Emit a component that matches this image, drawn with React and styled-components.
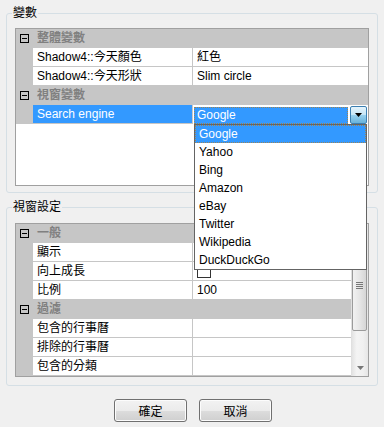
import React from "react";
import styled, { createGlobalStyle } from "styled-components";

const Global = createGlobalStyle`
  html, body { margin: 0; padding: 0; background: #f0f0f0; }
  body {
    font-family: "Liberation Sans", "Noto Sans CJK TC", sans-serif;
    font-size: 12px;
    color: #000;
  }
  * { box-sizing: border-box; }
`;

const Page = styled.div`
  width: 384px;
  height: 427px;
  padding: 6px 6px 0;
  display: flex;
  flex-direction: column;
  overflow: hidden;
`;

const Group = styled.fieldset`
  margin: ${(p) => p.$top}px 0 0;
  padding: 0;
  min-width: 0;
  border: 1px solid #d5dfe5;
  border-radius: 3px;
`;

const Legend = styled.legend`
  margin-left: 5px;
  padding: 0 1px;
  height: 14px;
  line-height: 14px;
`;

const GroupBody = styled.div`
  padding: ${(p) => p.$pt}px 8px ${(p) => p.$pb}px;
`;

const Grid = styled.div`
  height: ${(p) => p.$h}px;
  border: 1px solid #a0a0a0;
  background: #fff;
  display: flex;
  position: relative;
`;

const Rows = styled.div`
  flex: 1;
  min-width: 0;
  display: flex;
  flex-direction: column;
`;

const Row = styled.div`
  display: flex;
  height: 19px;
  flex: none;
`;

const Margin = styled.div`
  width: 17px;
  flex: none;
  background: #c6c6c6;
  display: flex;
  align-items: center;
  justify-content: center;
`;

const CatLabel = styled.div`
  flex: 1;
  background: #c6c6c6;
  color: #808080;
  font-weight: bold;
  padding-left: 4px;
  line-height: 19px;
`;

const NameCell = styled.div`
  width: 160px;
  flex: none;
  padding-left: 4px;
  line-height: 18px;
  border-right: 1px solid #c6c6c6;
  border-bottom: 1px solid #c6c6c6;
  background: ${(p) => (p.$selected ? "#3399ff" : "#fff")};
  color: ${(p) => (p.$selected ? "#fff" : "#000")};
  white-space: nowrap;
`;

const ValueCell = styled.div`
  flex: 1;
  min-width: 0;
  padding-left: 4px;
  line-height: 18px;
  border-bottom: 1px solid #c6c6c6;
  white-space: nowrap;
  display: flex;
  align-items: center;
`;

const ComboCell = styled.div`
  flex: 1;
  min-width: 0;
  position: relative;
  display: flex;
  padding: 1px 1px 0 1px;
`;

const ComboField = styled.div`
  flex: 1;
  height: 17px;
  margin: 1px 2px 0 0;
  background: #3399ff;
  color: #fff;
  border: 1px dotted #9a8458;
  padding-left: 2px;
  line-height: 15px;
`;

const ComboButton = styled.div`
  width: 17px;
  height: 18px;
  flex: none;
  border: 1px solid #3c7fb1;
  border-radius: 2px;
  background: linear-gradient(#e5f4fc 0%, #c4e5f6 50%, #98d1ef 51%, #68b3db 100%);
  display: flex;
  align-items: center;
  justify-content: center;
`;

const DropList = styled.div`
  position: absolute;
  z-index: 10;
  top: 19px;
  left: 1px;
  right: 1px;
  height: 146px;
  background: #fff;
  border: 1px solid #646464;
`;

const DropItem = styled.div`
  height: 18px;
  line-height: 16px;
  padding-left: 3px;
  border: 1px ${(p) => (p.$active ? "dotted #9a8458" : "solid transparent")};
  background: ${(p) => (p.$active ? "#3399ff" : "#fff")};
  color: ${(p) => (p.$active ? "#fff" : "#000")};
`;

const Filler = styled.div`
  flex: 1;
  background: #fff;
`;

const Check = styled.span`
  display: inline-block;
  width: 14px;
  height: 14px;
  border: 1px solid #333;
  background: #fff;
  margin-left: 0;
`;

const ScrollBar = styled.div`
  width: 17px;
  flex: none;
  display: flex;
  flex-direction: column;
  background: linear-gradient(90deg, #e3e3e3 0%, #f4f4f4 30%, #f0f0f0 70%, #e6e6e6 100%);
  border-left: 1px solid #e0e0e0;
`;

const ScrollArrow = styled.div`
  height: 17px;
  flex: none;
  display: flex;
  align-items: center;
  justify-content: center;
`;

const Thumb = styled.div`
  height: 90px;
  margin: 0 1px 0 0;
  border: 1px solid #9b9b9b;
  border-radius: 2px;
  background: linear-gradient(90deg, #f2f2f2 0%, #e6e6e6 50%, #d6d6d6 100%);
  display: flex;
  align-items: center;
  justify-content: center;
`;

const Track = styled.div`
  flex: 1;
`;

const ButtonBar = styled.div`
  display: flex;
  justify-content: center;
  gap: 12px;
  margin-top: 13px;
  padding-left: 2px;
`;

const Button = styled.button`
  width: 73px;
  height: 23px;
  padding: 0;
  border: 1px solid #707070;
  border-radius: 3px;
  background: linear-gradient(#f2f2f2 0%, #ebebeb 50%, #dddddd 51%, #cfcfcf 100%);
  font-family: "Liberation Sans", "Noto Sans CJK TC", sans-serif;
  font-size: 12px;
  color: #000;
  box-shadow: inset 0 0 0 1px #fcfcfc;
`;

const MinusBox = () => (
  <svg width="9" height="9" viewBox="0 0 9 9">
    <rect x="0.5" y="0.5" width="8" height="8" fill="none" stroke="#000" />
    <line x1="2" y1="4.5" x2="7" y2="4.5" stroke="#000" />
  </svg>
);

const DownTriangle = ({ color = "#000", w = 7, h = 4 }) => (
  <svg width={w} height={h} viewBox={`0 0 ${w} ${h}`}>
    <polygon points={`0,0 ${w},0 ${w / 2},${h}`} fill={color} />
  </svg>
);

const Category = ({ label }) => (
  <Row>
    <Margin>
      <MinusBox />
    </Margin>
    <CatLabel>{label}</CatLabel>
  </Row>
);

const Prop = ({ name, children }) => (
  <Row>
    <Margin />
    <NameCell>{name}</NameCell>
    <ValueCell>{children}</ValueCell>
  </Row>
);

const engines = ["Google", "Yahoo", "Bing", "Amazon", "eBay", "Twitter", "Wikipedia", "DuckDuckGo"];

export default function App() {
  return (
    <>
      <Global />
      <Page>
        <Group $top={0}>
          <Legend>變數</Legend>
          <GroupBody $pt={8} $pb={6}>
            <Grid $h={158}>
              <Rows>
                <Category label="整體變數" />
                <Prop name="Shadow4::今天顏色">紅色</Prop>
                <Prop name="Shadow4::今天形狀">Slim circle</Prop>
                <Category label="視窗變數" />
                <Row>
                  <Margin />
                  <NameCell $selected>Search engine</NameCell>
                  <ComboCell>
                    <ComboField>Google</ComboField>
                    <ComboButton>
                      <DownTriangle />
                    </ComboButton>
                    <DropList>
                      {engines.map((e, i) => (
                        <DropItem key={e} $active={i === 0}>
                          {e}
                        </DropItem>
                      ))}
                    </DropList>
                  </ComboCell>
                </Row>
                <Filler />
              </Rows>
            </Grid>
          </GroupBody>
        </Group>

        <Group $top={7}>
          <Legend>視窗設定</Legend>
          <GroupBody $pt={9} $pb={8}>
            <Grid $h={154}>
              <Rows>
                <Category label="一般" />
                <Prop name="顯示" />
                <Prop name="向上成長">
                  <Check />
                </Prop>
                <Prop name="比例">100</Prop>
                <Category label="過濾" />
                <Prop name="包含的行事曆" />
                <Prop name="排除的行事曆" />
                <Prop name="包含的分類" />
              </Rows>
              <ScrollBar>
                <ScrollArrow />
                <Thumb>
                  <svg width="7" height="8" viewBox="0 0 7 8">
                    <line x1="0" y1="0.5" x2="7" y2="0.5" stroke="#777" />
                    <line x1="0" y1="2.5" x2="7" y2="2.5" stroke="#777" />
                    <line x1="0" y1="4.5" x2="7" y2="4.5" stroke="#777" />
                    <line x1="0" y1="6.5" x2="7" y2="6.5" stroke="#777" />
                  </svg>
                </Thumb>
                <Track />
                <ScrollArrow>
                  <DownTriangle color="#777" w={7} h={4} />
                </ScrollArrow>
              </ScrollBar>
            </Grid>
          </GroupBody>
        </Group>

        <ButtonBar>
          <Button>確定</Button>
          <Button>取消</Button>
        </ButtonBar>
      </Page>
    </>
  );
}
